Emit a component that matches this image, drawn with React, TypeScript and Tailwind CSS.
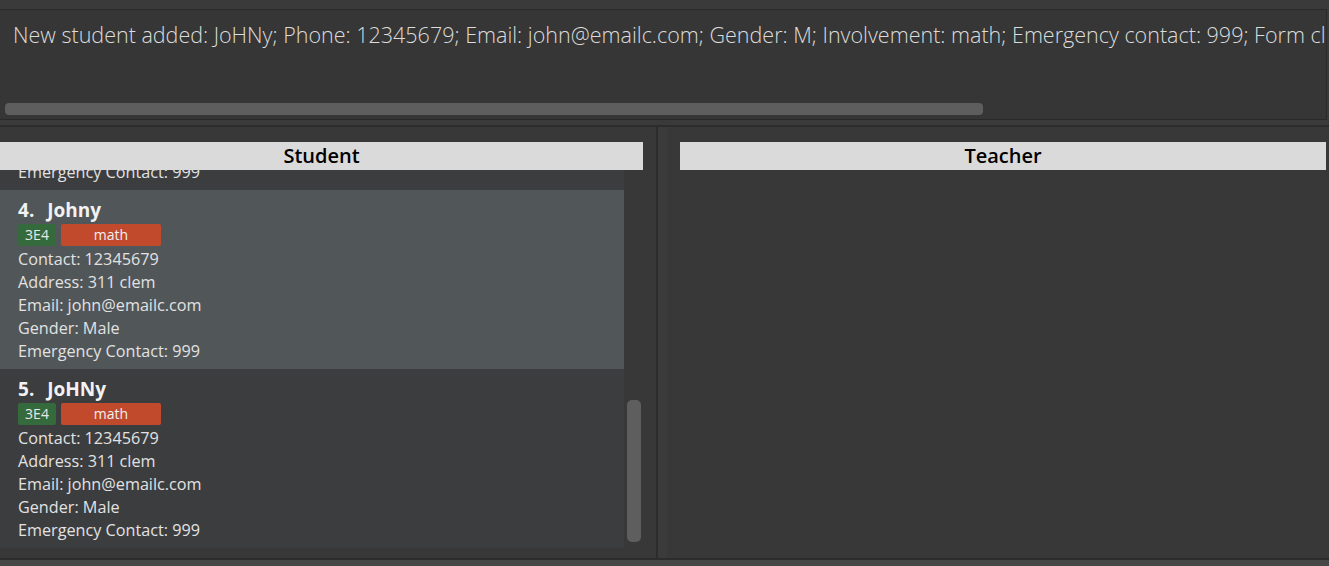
import React from "react";

type Student = {
  index: number;
  name: string;
  formClass: string;
  involvement: string;
  contact: string;
  address: string;
  email: string;
  gender: string;
  emergency: string;
};

const students: Student[] = [
  { index: 3, name: "John", formClass: "3E4", involvement: "math", contact: "12345679", address: "311 clem", email: "john@emailc.com", gender: "Male", emergency: "999" },
  { index: 4, name: "Johny", formClass: "3E4", involvement: "math", contact: "12345679", address: "311 clem", email: "john@emailc.com", gender: "Male", emergency: "999" },
  { index: 5, name: "JoHNy", formClass: "3E4", involvement: "math", contact: "12345679", address: "311 clem", email: "john@emailc.com", gender: "Male", emergency: "999" },
];

const message =
  "New student added: JoHNy; Phone: 12345679; Email: john@emailc.com; Gender: M; Involvement: math; Emergency contact: 999; Form class: 3E4";

function StudentCard({ s, selected, first }: { s: Student; selected: boolean; first?: boolean }) {
  return (
    <div
      className={`h-[179px] shrink-0 px-[18px] pt-[8px] ${selected ? "bg-[#515659]" : "bg-[#3c3d3f]"} ${first ? "-mt-[159px]" : ""}`}
    >
      <div className="h-[24px] leading-[24px] text-[19px] font-bold text-[#f2f2f2] whitespace-pre">
        {s.index}.  <span className="ml-[3px]">{s.name}</span>
      </div>
      <div className="flex gap-[5px] mt-[2px] h-[22px]">
        <span className="w-[38px] rounded-[2px] bg-[#356a3d] text-[14px] leading-[22px] text-center text-[#e8e8e8]">
          {s.formClass}
        </span>
        <span className="w-[100px] rounded-[2px] bg-[#c24a2c] text-[14px] leading-[22px] text-center text-[#f0f0f0]">
          {s.involvement}
        </span>
      </div>
      <div className="mt-[2px] text-[16.2px] leading-[23px] text-[#e2e2e2]">
        <div>Contact: {s.contact}</div>
        <div>Address: {s.address}</div>
        <div>Email: {s.email}</div>
        <div>Gender: {s.gender}</div>
        <div>Emergency Contact: {s.emergency}</div>
      </div>
    </div>
  );
}

export default function App() {
  return (
    <div className="w-[1329px] h-[566px] bg-[#3a3a3a] flex flex-col overflow-hidden font-['Open_Sans',sans-serif]">
      {/* result display */}
      <div className="h-[9px] shrink-0" />
      <div className="h-[111px] shrink-0 mr-[2px] bg-[#363636] border-y border-r border-[#2a2a2a] flex flex-col overflow-hidden">
        <div className="pl-[13px] pt-[10px] text-[21.5px] leading-[29px] font-light text-[#dcdcdc] whitespace-nowrap">
          {message}
        </div>
        <div className="mt-auto mb-[4px] ml-[5px] w-[978px] h-[12px] rounded-[4px] bg-[#5e5e5e] shrink-0" />
      </div>
      <div className="h-[5px] shrink-0" />
      <div className="h-[2px] shrink-0 bg-[#2c2c2c]" />

      {/* lists */}
      <div className="flex-1 flex min-h-0 bg-[#383838]">
        <div className="w-[656px] flex flex-col pt-[15px] min-h-0">
          <div className="w-[643px] h-[28px] bg-[#dadada] text-center text-[20px] leading-[28px] font-semibold text-black">
            Student
          </div>
          <div className="w-[643px] flex flex-1 min-h-0 overflow-hidden">
            <div className="w-[624px] flex flex-col overflow-hidden">
              <StudentCard s={students[0]} selected={false} first />
              <StudentCard s={students[1]} selected />
              <StudentCard s={students[2]} selected={false} />
            </div>
            <div className="flex-1 pl-[3px] pr-[2px] pt-[230px]">
              <div className="h-[142px] rounded-[5px] bg-[#5e5e5e]" />
            </div>
          </div>
        </div>
        <div className="w-[2px] bg-[#2c2c2c]" />
        <div className="w-[9px] bg-[#3b3b3b]" />
        <div className="flex-1 flex flex-col pt-[15px] pl-[13px] pr-[3px]">
          <div className="h-[28px] bg-[#dadada] text-center text-[20px] leading-[28px] font-semibold text-black">
            Teacher
          </div>
        </div>
      </div>
      <div className="h-[2px] shrink-0 bg-[#2c2c2c]" />
      <div className="h-[6px] shrink-0 bg-[#474747]" />
    </div>
  );
}
